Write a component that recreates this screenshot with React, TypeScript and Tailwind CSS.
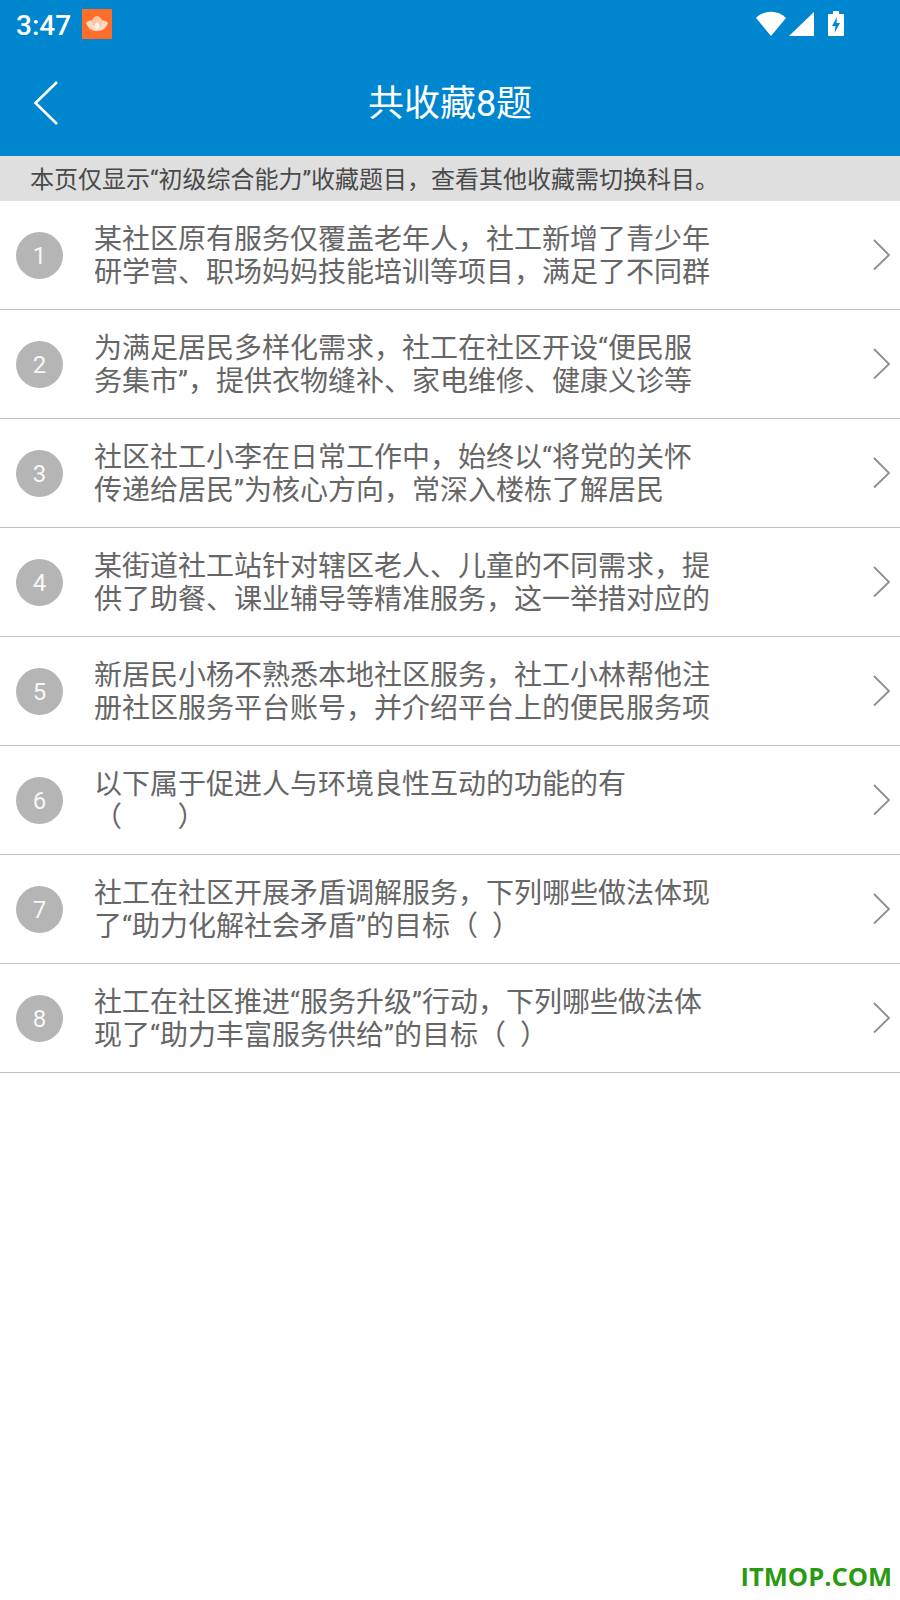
import React from "react";

const questions: [string, string][] = [
  ["某社区原有服务仅覆盖老年人，社工新增了青少年", "研学营、职场妈妈技能培训等项目，满足了不同群"],
  ["为满足居民多样化需求，社工在社区开设“便民服", "务集市”，提供衣物缝补、家电维修、健康义诊等"],
  ["社区社工小李在日常工作中，始终以“将党的关怀", "传递给居民”为核心方向，常深入楼栋了解居民"],
  ["某街道社工站针对辖区老人、儿童的不同需求，提", "供了助餐、课业辅导等精准服务，这一举措对应的"],
  ["新居民小杨不熟悉本地社区服务，社工小林帮他注", "册社区服务平台账号，并介绍平台上的便民服务项"],
  ["以下属于促进人与环境良性互动的功能的有", "（\u00a0\u00a0\u00a0\u00a0\u00a0\u00a0\u00a0\u00a0）"],
  ["社工在社区开展矛盾调解服务，下列哪些做法体现", "了“助力化解社会矛盾”的目标（\u00a0\u2005）"],
  ["社工在社区推进“服务升级”行动，下列哪些做法体", "现了“助力丰富服务供给”的目标（\u00a0\u2005）"],
];

const StatusBar = () => (
  <div className="flex h-[52px] items-center pl-4 pr-0 text-white">
    <span className="text-[28px] leading-none font-medium">3:47</span>
    <svg width="30" height="30" viewBox="0 0 30 30" className="ml-[11px] mb-[4px]">
      <rect width="30" height="30" fill="#ff6d2a" />
      <path d="M4 14C7 11 10 11 12 13L15 22C9 22 6 19 4 14Z" fill="#ffd9c6" />
      <path d="M26 14C23 11 20 11 18 13L15 22C21 22 24 19 26 14Z" fill="#ffd9c6" />
      <path d="M15 7C19 8 21 11 20 15L15 22L10 15C9 11 11 8 15 7Z" fill="#ffc3a6" />
      <path d="M15 13C18 15 19 18 15 22C11 18 12 15 15 13Z" fill="#fff1e9" />
    </svg>
    <svg width="90" height="26" viewBox="0 0 90 26" className="ml-auto mr-[54px] mb-[4px]">
      <path d="M0 7C8 -1.5 22 -1.5 30 7L15 25Z" fill="#fff" />
      <path d="M33 25L58 1V25Z" fill="#fff" />
      <path d="M73 3H77V0H83V3H87A1 1 0 0 1 88 4V24A1 1 0 0 1 87 25H73A1 1 0 0 1 72 24V4A1 1 0 0 1 73 3Z" fill="#fff" />
      <path d="M81 6L76 15H79.5L78.5 22L84 12H80.5Z" fill="#0085cf" />
    </svg>
  </div>
);

const QuestionRow = ({ index, lines }: { index: number; lines: [string, string] }) => (
  <div className="flex h-[109px] items-center border-b border-[#c4c4c4] pl-4">
    <div className="flex h-[47px] w-[47px] shrink-0 items-center justify-center rounded-full bg-[#b5b5b5] pt-[1px] text-[24px] text-[#f7f7f7]">
      {index}
    </div>
    <div className="ml-[31px] pt-[2px] text-[28px] leading-[33px] whitespace-nowrap text-[#666666]">
      <div>{lines[0]}</div>
      <div>{lines[1]}</div>
    </div>
    <svg width="20" height="34" viewBox="0 0 20 34" className="ml-auto mr-[8px] shrink-0">
      <path d="M2 2L17 17L2 31.5" fill="none" stroke="#8f8f8f" strokeWidth="1.8" />
    </svg>
  </div>
);

export default function App() {
  return (
    <div className="relative min-h-[1600px] bg-white font-['Roboto','Noto_Sans_CJK_SC',sans-serif]">
      <header className="h-[156px] bg-[#0085cf]">
        <StatusBar />
        <div className="relative flex h-[104px] items-center justify-center">
          <svg width="28" height="46" viewBox="0 0 28 46" className="absolute top-[28px] left-[33px]">
            <path d="M24 2L2.5 23L24 44" fill="none" stroke="#fff" strokeWidth="2.6" />
          </svg>
          <h1 className="text-[36px] leading-none font-normal text-white">共收藏8题</h1>
        </div>
      </header>
      <div className="h-[45px] bg-[#dfdfdf] pl-[30px] text-[24px] leading-[48px] whitespace-nowrap text-[#4a4a4a]">
        本页仅显示“初级综合能力”收藏题目，查看其他收藏需切换科目。
      </div>
      <div>
        {questions.map((lines, i) => (
          <QuestionRow key={i} index={i + 1} lines={lines} />
        ))}
      </div>
      <div className="absolute right-[8px] bottom-[11px] font-['Open_Sans',sans-serif] text-[25.5px] leading-none font-bold text-[#2a9a12]">
        ITMOP.COM
      </div>
    </div>
  );
}
